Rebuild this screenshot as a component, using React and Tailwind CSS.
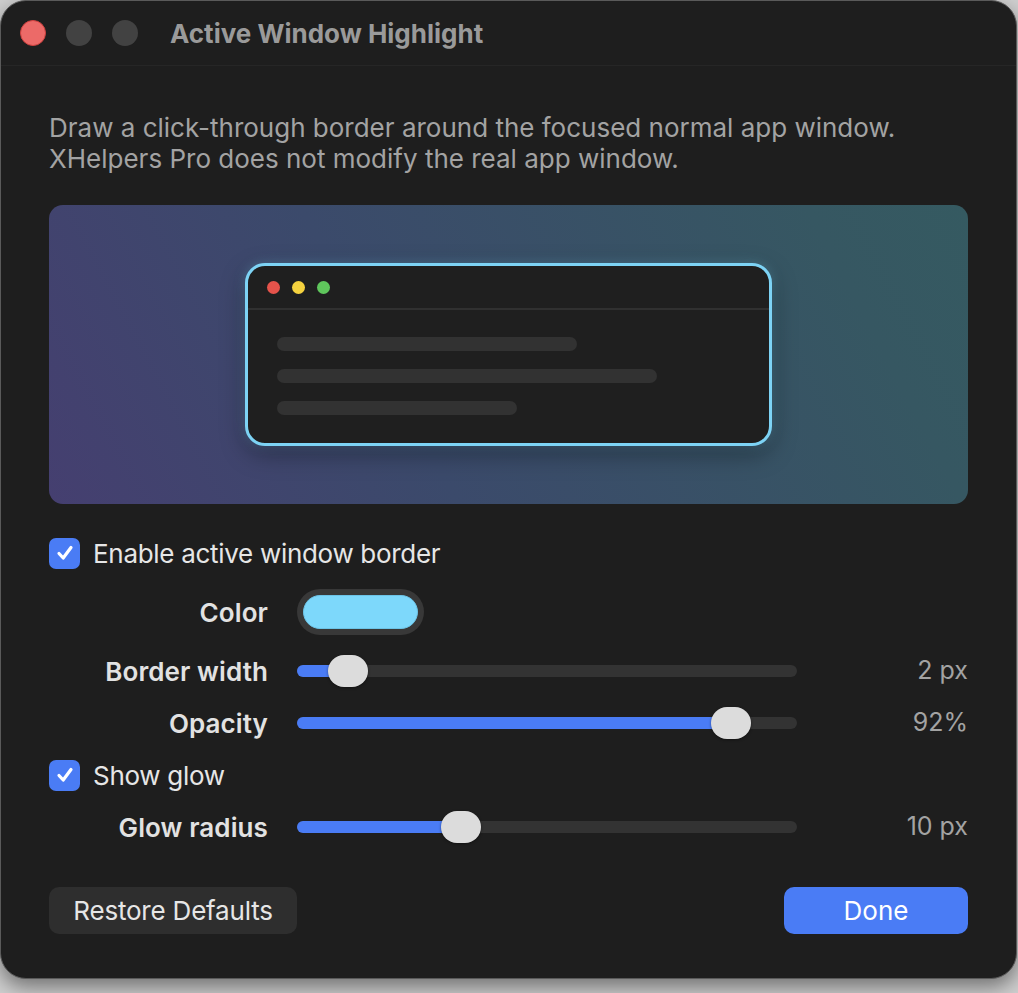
import { useState } from 'react'

const font = { fontFamily: 'Inter, "Noto Sans", "Liberation Sans", sans-serif' }

function TrafficLights() {
  return (
    <div className="flex items-center gap-[20px]">
      <span className="w-[26px] h-[26px] rounded-full bg-[#ec6a68] border border-[#d0413f]" />
      <span className="w-[26px] h-[26px] rounded-full bg-[#424242]" />
      <span className="w-[26px] h-[26px] rounded-full bg-[#424242]" />
    </div>
  )
}

function Checkbox({ checked }) {
  return (
    <span
      className={`w-[31px] h-[31px] rounded-[7px] flex items-center justify-center ${
        checked ? 'bg-[#4a7cf5]' : 'bg-[#3a3a3a]'
      }`}
    >
      {checked && (
        <svg width="20" height="20" viewBox="0 0 20 20" fill="none">
          <path d="M4 10.5 L8.2 15 L16 4.5" stroke="white" strokeWidth="3.2" strokeLinecap="round" strokeLinejoin="round" />
        </svg>
      )}
    </span>
  )
}

function Slider({ value }) {
  // value is 0..1, thumb centre sits on the fill end
  return (
    <div className="relative w-[500px] h-[32px] flex items-center">
      <div className="w-full h-[12px] rounded-full bg-[#333333] overflow-hidden">
        <div className="h-full bg-[#4a7cf5]" style={{ width: `${value * 100}%` }} />
      </div>
      <div
        className="absolute top-0 w-[40px] h-[32px] rounded-full bg-[#dcdcdc] shadow-[0_1px_3px_rgba(0,0,0,0.4)]"
        style={{ left: `calc(${value * 100}% - 20px)` }}
      />
    </div>
  )
}

function Row({ label, children, value, tall }) {
  return (
    <div className={`flex items-center ${tall ? 'h-[46px]' : 'h-[32px]'}`}>
      <div className="w-[219px] text-right text-[26px] font-semibold text-[#e2e2e2] tracking-[0.1px]">{label}</div>
      <div className="ml-[29px]">{children}</div>
      {value && (
        <div className="ml-auto text-[25px] text-[#a3a3a3]">{value}</div>
      )}
    </div>
  )
}

function Preview() {
  return (
    <div className="h-[299px] rounded-[14px] bg-[linear-gradient(62deg,#453f70_0%,#3b4a6b_38%,#365762_85%,#355a61_100%)] flex items-center justify-center">
      <div className="w-[527px] h-[183px] rounded-[20px] border-[3px] border-[#7dd3f5] bg-[#1f1f1f] overflow-hidden shadow-[0_8px_24px_rgba(0,0,0,0.35),0_0_12px_rgba(125,211,245,0.3)]">
        <div className="h-[44px] flex items-center gap-[12px] pl-[19px] border-b-2 border-[#303030]">
          <span className="w-[13px] h-[13px] rounded-full bg-[#e5534b]" />
          <span className="w-[13px] h-[13px] rounded-full bg-[#f5d23f]" />
          <span className="w-[13px] h-[13px] rounded-full bg-[#5fc65c]" />
        </div>
        <div className="pl-[29px] pt-[27px] flex flex-col gap-[18px]">
          <div className="w-[300px] h-[14px] rounded-full bg-[#323232]" />
          <div className="w-[380px] h-[14px] rounded-full bg-[#323232]" />
          <div className="w-[240px] h-[14px] rounded-full bg-[#323232]" />
        </div>
      </div>
    </div>
  )
}

export default function App() {
  const [enabled] = useState(true)
  const [glow] = useState(true)

  return (
    <div className="w-[1018px] h-[993px] bg-[#cfcfcf] overflow-hidden" style={font}>
      <div className="w-[1017px] h-[979px] rounded-[26px] bg-[#1e1e1e] border border-[#5a5a5a] shadow-[0_8px_20px_rgba(0,0,0,0.45)] flex flex-col">
        {/* Title bar */}
        <div className="h-[65px] shrink-0 flex items-center pl-[19px] border-b border-[#262626]">
          <TrafficLights />
          <div className="ml-[32px] text-[26px] font-bold text-[#9a9a9a]">Active Window Highlight</div>
        </div>

        <div className="px-[48px] pt-[46px] flex flex-col">
          <p className="text-[26px] leading-[31px] text-[#a3a3a3]">
            Draw a click-through border around the focused normal app window.
            <br />
            XHelpers Pro does not modify the real app window.
          </p>

          <div className="mt-[31px]">
            <Preview />
          </div>

          <div className="mt-[33px] flex flex-col gap-[20px]">
            <div className="h-[32px] flex items-center gap-[13px]">
              <Checkbox checked={enabled} />
              <span className="text-[26px] text-[#e6e6e6] tracking-[-0.3px]">Enable active window border</span>
            </div>

            <Row label="Color" tall>
              <div className="w-[127px] h-[46px] rounded-full bg-[#383838] p-[6px]">
                <div className="w-full h-full rounded-full bg-[#7dd8fb] border border-[#6cc3e6]" />
              </div>
            </Row>

            <Row label="Border width" value="2 px">
              <Slider value={0.102} />
            </Row>

            <Row label="Opacity" value="92%">
              <Slider value={0.868} />
            </Row>

            <div className="h-[32px] flex items-center gap-[13px]">
              <Checkbox checked={glow} />
              <span className="text-[26px] text-[#e6e6e6] tracking-[-0.3px]">Show glow</span>
            </div>

            <Row label="Glow radius" value="10 px">
              <Slider value={0.328} />
            </Row>
          </div>

          <div className="mt-[44px] flex items-center justify-between">
            <button className="w-[248px] h-[47px] rounded-[10px] bg-[#2e2e2e] text-[26px] text-[#e6e6e6] tracking-[-0.2px]">
              Restore Defaults
            </button>
            <button className="w-[184px] h-[47px] rounded-[10px] bg-[#4a7cf5] text-[26px] text-white">
              Done
            </button>
          </div>
        </div>
      </div>
    </div>
  )
}
